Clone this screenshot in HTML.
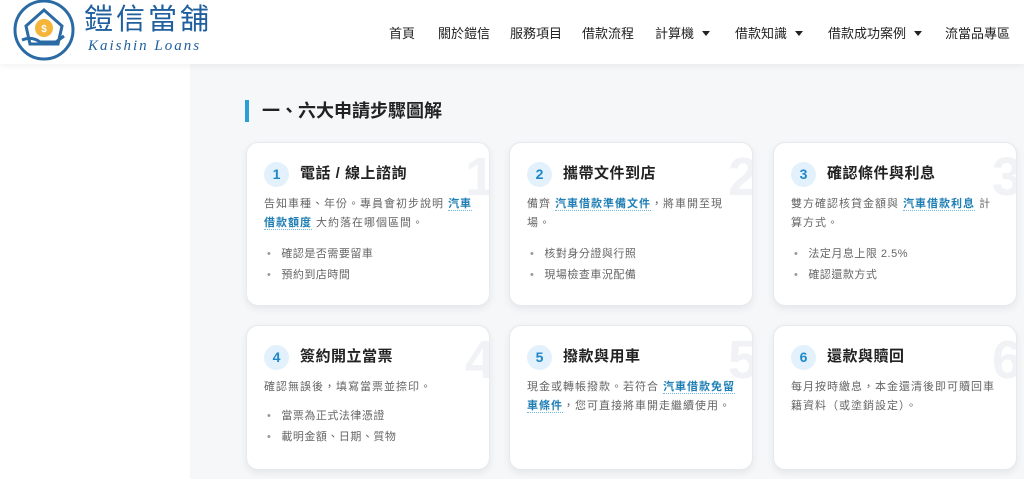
<!DOCTYPE html>
<html><head><meta charset="utf-8"><style>
*{margin:0;padding:0;box-sizing:border-box}
body{width:1024px;height:479px;overflow:hidden;background:#fff;font-family:"Liberation Sans","Noto Sans CJK TC",sans-serif;position:relative}
.hdr{position:absolute;left:0;top:0;width:1024px;height:64px;background:#fff;box-shadow:0 2px 6px rgba(0,0,0,.06);z-index:2}
.main{position:absolute;left:190px;top:64px;right:0;bottom:0;background:#f5f7f9}
.nav{position:absolute;top:23px;font-size:13px;color:#222;white-space:nowrap}
.nav span{position:absolute}
.tri{display:inline-block;width:0;height:0;border-left:4px solid transparent;border-right:4px solid transparent;border-top:5px solid #222;margin-left:8px;vertical-align:2px}
.h2{position:absolute;left:245px;top:100px;height:22px;border-left:4px solid #2a9fd6;padding-left:13px;font-size:18px;font-weight:bold;color:#222;line-height:22px}
.card{position:absolute;width:244px;background:#fff;border:1px solid #e6e9ee;border-radius:12px;box-shadow:0 3px 8px rgba(0,0,0,.07);overflow:hidden}
.num{position:absolute;left:17px;top:19px;width:25px;height:25px;border-radius:50%;background:#e2f1fb;color:#1e88c8;font-weight:bold;font-size:14px;text-align:center;line-height:25px}
.t{position:absolute;left:53px;top:20px;font-size:15px;font-weight:bold;color:#222;line-height:22px;letter-spacing:.5px}
.wm{position:absolute;right:-6px;top:4px;font-size:54px;font-weight:bold;color:#f0f2f5;line-height:60px}
.d{position:absolute;left:17px;top:52px;width:210px;font-size:11px;letter-spacing:1px;color:#666;line-height:19px}
.d b{color:#1f7fb5;border-bottom:1px dotted #6fb8e0}
.ul{position:absolute;left:20px;top:101px;font-size:11px;letter-spacing:.5px;color:#666;line-height:21px;list-style:none}
.ul li:before{content:"•";color:#999;margin-right:10px}
</style></head><body>
<div class="hdr">
<svg style="position:absolute;left:12px;top:0" width="64" height="62" viewBox="0 0 64 62">
<circle cx="32" cy="30" r="29" fill="#fff" stroke="#2a6aa5" stroke-width="3"/>
<path d="M14 26 L32 10 L50 26 L46 44 L18 44 Z" fill="none" stroke="#2a6aa5" stroke-width="3"/>
<circle cx="32" cy="28" r="9" fill="#f5b43a"/>
<text x="32" y="32" font-size="10" text-anchor="middle" fill="#fff" font-weight="bold">$</text>
<path d="M10 40 Q20 36 28 42 L44 42 L52 36" fill="none" stroke="#2a6aa5" stroke-width="3"/>
</svg>
<div style="position:absolute;left:84px;top:3px;font-size:29px;color:#1f5f9e;letter-spacing:3px;line-height:34px">鎧信當舖</div>
<div style="position:absolute;left:88px;top:38px;font-size:15px;color:#1f5f9e;font-style:italic;font-family:'Liberation Serif',serif;letter-spacing:2px">Kaishin Loans</div>
<div class="nav">
<span style="left:389px">首頁</span>
<span style="left:438px">關於鎧信</span>
<span style="left:510px">服務項目</span>
<span style="left:582px">借款流程</span>
<span style="left:655px">計算機<i class="tri"></i></span>
<span style="left:735px">借款知識<i class="tri"></i></span>
<span style="left:828px">借款成功案例<i class="tri"></i></span>
<span style="left:945px">流當品專區</span>
</div>
</div>
<div class="main"></div>
<div class="h2">一、六大申請步驟圖解</div>

<div class="card" style="left:246px;top:142px;height:164px"><div class="wm">1</div><div class="num">1</div><div class="t">電話 / 線上諮詢</div>
<div class="d">告知車種、年份。專員會初步說明 <b>汽車借款額度</b> 大約落在哪個區間。</div>
<ul class="ul"><li>確認是否需要留車</li><li>預約到店時間</li></ul></div>

<div class="card" style="left:509px;top:142px;height:164px"><div class="wm">2</div><div class="num">2</div><div class="t">攜帶文件到店</div>
<div class="d">備齊 <b>汽車借款準備文件</b>，將車開至現場。</div>
<ul class="ul"><li>核對身分證與行照</li><li>現場檢查車況配備</li></ul></div>

<div class="card" style="left:773px;top:142px;height:164px"><div class="wm">3</div><div class="num">3</div><div class="t">確認條件與利息</div>
<div class="d">雙方確認核貸金額與 <b>汽車借款利息</b> 計算方式。</div>
<ul class="ul"><li>法定月息上限 2.5%</li><li>確認還款方式</li></ul></div>

<div class="card" style="left:246px;top:325px;height:145px"><div class="wm">4</div><div class="num">4</div><div class="t">簽約開立當票</div>
<div class="d">確認無誤後，填寫當票並捺印。</div>
<ul class="ul" style="top:80px"><li>當票為正式法律憑證</li><li>載明金額、日期、質物</li></ul></div>

<div class="card" style="left:509px;top:325px;height:145px"><div class="wm">5</div><div class="num">5</div><div class="t">撥款與用車</div>
<div class="d">現金或轉帳撥款。若符合 <b>汽車借款免留車條件</b>，您可直接將車開走繼續使用。</div></div>

<div class="card" style="left:773px;top:325px;height:145px"><div class="wm">6</div><div class="num">6</div><div class="t">還款與贖回</div>
<div class="d">每月按時繳息，本金還清後即可贖回車籍資料（或塗銷設定）。</div></div>
</body></html>
